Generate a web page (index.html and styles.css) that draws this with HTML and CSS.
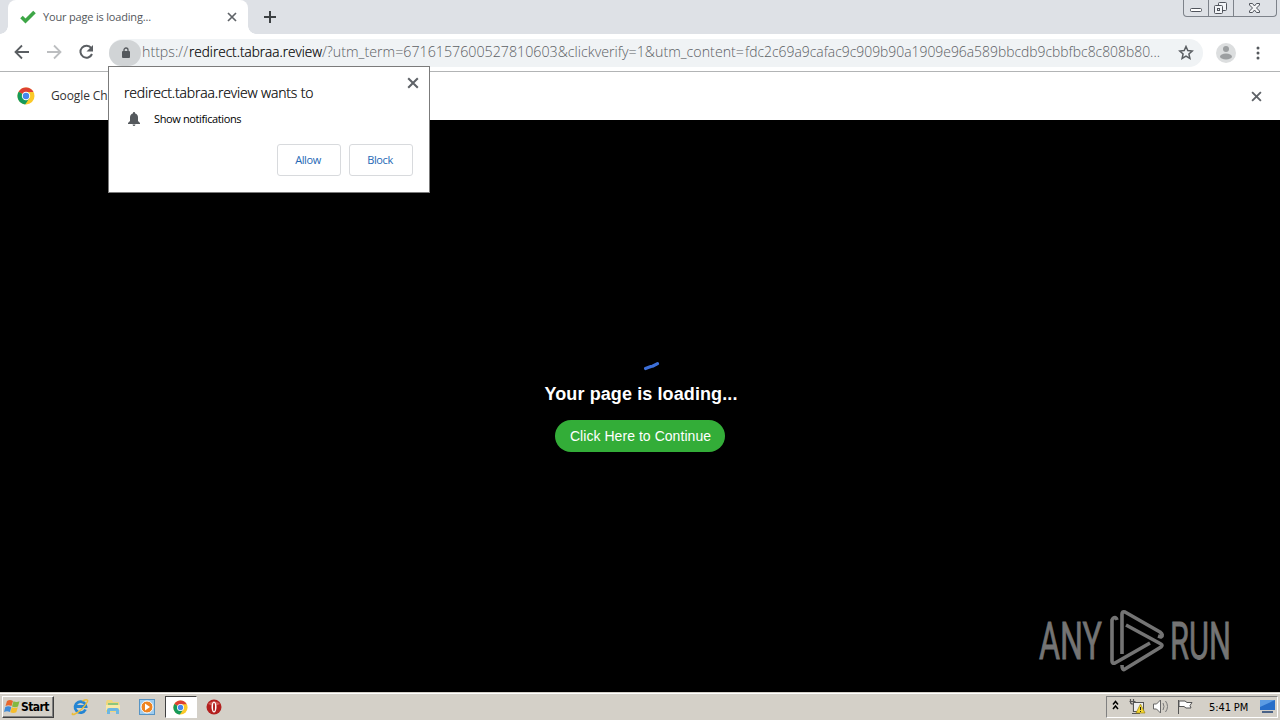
FILE: index.html
```html
<!DOCTYPE html>
<html lang="en">
<head>
    <meta charset="UTF-8">
    <meta name="viewport" content="width=device-width, initial-scale=1.0">
    <title>Your page is loading...</title>
    <link rel="stylesheet" href="styles.css">
</head>
<body>
    <svg width="0" height="0" class="defs">
        <symbol id="chrome" viewBox="0 0 18 18">
            <circle cx="9" cy="9" r="8.5" fill="#fbc928"/>
            <path d="M9 9L1.6 4.8A8.5 8.5 0 0 1 16.5 5H9z" fill="#dd4034"/>
            <path d="M9 9L1.6 4.8A8.5 8.5 0 0 0 8.2 17.5L12.5 11z" fill="#159a5a"/>
            <circle cx="9" cy="9" r="4.2" fill="#fff"/>
            <circle cx="9" cy="9" r="3.2" fill="#4688ee"/>
        </symbol>
        <symbol id="close" viewBox="0 0 10 10">
            <path d="M1 1l8 8M9 1L1 9" stroke="#5f6368" stroke-width="1.7"/>
        </symbol>
    </svg>
    <div class="tabs">
        <div class="tab">
            <svg class="check" width="16" height="14" viewBox="0 0 16 14"><path d="M1.500 7l4 4L14.500 2" fill="none" stroke="#3da646" stroke-width="3.600"/></svg>
            <span class="tab-title">Your page is loading...</span>
            <svg class="tab-close" width="10" height="10"><use href="#close"/></svg>
        </div>
        <svg class="plus" width="12" height="12" viewBox="0 0 12 12"><path d="M6 0v12M0 6h12" stroke="#3c4043" stroke-width="2"/></svg>
        <ul class="win-btn">
            <li><svg width="24" height="16" viewBox="0 0 24 16"><rect x="6.500" y="8.500" width="11" height="3" rx="1" fill="#fff" stroke="#50545c"/></svg></li>
            <li><svg width="24" height="16" viewBox="0 0 24 16"><g fill="#f2f4f7" stroke="#50545c"><rect x="9.500" y="2.500" width="8" height="8" rx="1"/><rect x="5.500" y="5.500" width="8" height="8" rx="1"/><rect x="8.500" y="8.500" width="2" height="2"/></g></svg></li>
            <li><svg width="42" height="16" viewBox="0 0 42 16"><path d="M15.500 3.500h3l2 2.500 2-2.500h3v1.500l-3 3 3 3v1.500h-3l-2-2.500-2 2.500h-3V11l3-3-3-3z" fill="#f4f5f7" stroke="#50545c"/></svg></li>
        </ul>
    </div>
    <div class="toolbar">
        <svg class="nav" width="108" height="37" viewBox="0 0 108 37">
            <path d="M29 18H16M22 11.500L15.500 18l6.500 6.500" fill="none" stroke="#5a5e62" stroke-width="1.800"/>
            <path d="M47 18h13M54 11.500l6.500 6.500-6.500 6.500" fill="none" stroke="#bcbec0" stroke-width="1.800"/>
            <path d="M91.300 14.200A6 6 0 1 0 92 20" fill="none" stroke="#5a5e62" stroke-width="2"/>
            <path d="M93 11v6.500h-6.500z" fill="#5a5e62"/>
        </svg>
        <div class="omnibox">
            <span class="lock"><svg width="8" height="12" viewBox="0 0 8 12"><rect y="4" width="8" height="7" rx="1" fill="#55595d"/><path d="M2 4.500V3a2 2 0 0 1 4 0v1.500" fill="none" stroke="#55595d" stroke-width="1.300"/></svg></span>
            <svg class="url" width="1022" height="28">
                <text x="0" y="18" textLength="46" lengthAdjust="spacingAndGlyphs">https://</text>
                <text class="host" x="47" y="18" textLength="133" lengthAdjust="spacingAndGlyphs">redirect.tabraa.review</text>
                <text x="180" y="18" textLength="422" lengthAdjust="spacingAndGlyphs">/?utm_term=6716157600527810603&amp;clickverify=1&amp;utm_content=</text>
                <text x="603" y="18" textLength="415" lengthAdjust="spacingAndGlyphs">fdc2c69a9cafac9c909b90a1909e96a589bbcdb9cbbfbc8c808b80...</text>
            </svg>
            <svg class="star" width="16" height="16" viewBox="0 0 16 16"><path d="M8 1.500l1.800 4.100 4.400.4-3.300 3 1 4.400L8 11.100l-3.900 2.300 1-4.400-3.300-3 4.400-.4z" fill="none" stroke="#5a5e62" stroke-width="1.500"/></svg>
        </div>
        <svg class="avatar" width="20" height="20" viewBox="0 0 20 20"><circle cx="10" cy="10" r="10" fill="#dcdedf"/><circle cx="10" cy="6" r="3" fill="#9c9fa1"/><ellipse cx="10" cy="13.500" rx="6" ry="3" fill="#9c9fa1"/></svg>
        <svg class="dots" width="4" height="14" viewBox="0 0 4 14"><g fill="#55595d"><circle cx="2" cy="2" r="1.500"/><circle cx="2" cy="7" r="1.500"/><circle cx="2" cy="12" r="1.500"/></g></svg>
    </div>
    <div class="infobar">
        <svg width="18" height="18"><use href="#chrome"/></svg>
        <span>Google Ch</span>
        <svg class="info-close" width="11" height="11"><use href="#close"/></svg>
    </div>
    <div class="page">
        <svg class="spinner" width="20" height="14" viewBox="0 0 20 14"><path d="M3.500 10.500l4-1.500 3.500-1 5.500-2.800" fill="none" stroke="#3d6fd8" stroke-width="3.200" stroke-linecap="round" stroke-dasharray="5.500 2"/><path d="M4 10.300l4-1.400 3.500-1 4.500-2.400" fill="none" stroke="#3d6fd8" stroke-width="1.600"/></svg>
        <h1>Your page is loading...</h1>
        <a class="continue">Click Here to Continue</a>
        <svg class="watermark" width="240" height="80" viewBox="0 0 240 80">
            <text x="19" y="59" textLength="63" lengthAdjust="spacingAndGlyphs">ANY</text>
            <text x="150" y="59" textLength="61" lengthAdjust="spacingAndGlyphs">RUN</text>
            <g fill="none" stroke="#747474" stroke-width="3.600" stroke-linejoin="round">
                <path d="M97 20q-1-4-4-1.500L92 20v41q0 3 3 2l35-20"/>
                <path d="M102 54V14q0-3 3-2l35 20q4 3 1 5l-3-1"/>
                <path d="M106 25l35 19q2 1 0 3l-36 22q-3 2-3-4"/>
            </g>
        </svg>
    </div>
    <div class="taskbar">
        <div class="start">
            <svg width="17" height="16" viewBox="0 0 17 16"><path d="M3 2q3-2 6 0L7.500 7q-3-1.500-6 0z" fill="#e8672c"/><path d="M9.500 2.300q3 1.500 6 0L14 7.500q-3 1.500-6 0z" fill="#83b841"/><path d="M1.300 8q3-1.500 6 0L6 13q-3-1.500-6 0z" fill="#3f8bd8"/><path d="M7.800 8.300q3 1.500 6 0l-1.500 5q-3 1.500-6 0z" fill="#f6bd2c"/></svg>
            <span>Start</span>
        </div>
        <ul class="launch">
            <li><svg width="18" height="18" viewBox="0 0 18 18"><path d="M14.500 11.500A5.500 5.500 0 1 1 15 8.500H5" fill="none" stroke="#2485d3" stroke-width="2.800"/><path d="M2 15Q0 17 3 16.500 12 12 16.500 3.500q1-3-5-.5" fill="none" stroke="#ecbd38" stroke-width="1.500"/></svg></li>
            <li><svg width="18" height="18" viewBox="0 0 18 18"><path d="M2 4l1-2h5l1 2h6v10H2z" fill="#f0d67c"/><path d="M4 5h10v3H4z" fill="#8cc67c"/><path d="M2 7h14v5H2z" fill="#f9e9a7"/><path d="M3 16v-4q0-2 2-2h8q2 0 2 2v4h-3v-3H6v3z" fill="#6db7e2"/></svg></li>
            <li><svg width="18" height="18" viewBox="0 0 18 18"><rect x="1.500" y="1.500" width="15" height="15" fill="#9dccef" stroke="#5794c4"/><circle cx="9" cy="9" r="6" fill="#ee8421" stroke="#fff"/><path d="M7 5.500l5 3.500-5 3.500z" fill="#fff"/></svg></li>
            <li class="active"><svg width="15" height="15"><use href="#chrome"/></svg></li>
            <li><svg width="18" height="18" viewBox="0 0 18 18"><circle cx="9" cy="9" r="7.500" fill="#b3201f"/><path d="M3 6a7 5 0 0 1 12 0q-6 3-12 0" fill="#d45a55"/><ellipse cx="9" cy="9" rx="2.500" ry="5.500" fill="#fff"/><ellipse cx="9" cy="9" rx="1" ry="4.200" fill="#b3201f"/></svg></li>
        </ul>
        <div class="tray">
            <svg width="90" height="20" viewBox="0 0 90 20">
                <path d="M6 7.500l2.500-3L11 7.500M6 12l2.500-3 2.500 3" fill="none" stroke="#000" stroke-width="1.500"/>
                <path d="M23.500 2v3q0 2 2 2h1v8M26.500 2v5M22.500 4.500h6" fill="none" stroke="#555" stroke-width="1.200"/>
                <rect x="26.500" y="5.500" width="10" height="9" fill="#eee" stroke="#555"/>
                <path d="M25 16.500h8" stroke="#555"/>
                <path d="M33.500 7l4.500 9h-9z" fill="#f6d72e" stroke="#9b8419" stroke-width=".7"/><path d="M33.500 10v3M33.500 14v1" stroke="#222"/>
                <path d="M46.500 7h3l4-4v13l-4-4h-3z" fill="#fff" stroke="#666"/>
                <path d="M56 6q2 3.500 0 7M58.500 4q4 5.500 0 11" fill="none" stroke="#777"/>
                <path d="M71.500 17V3M72 4h6l2 1.500h5l-2 3 1 2.500h-5l-2-1.500H72z" fill="#fff" stroke="#555"/>
            </svg>
            <span class="time">5:41 PM</span>
            <svg width="17" height="16" viewBox="0 0 17 16"><path d="M1 1h15v10H1z" fill="#276ec9"/><path d="M1 1h15L1 8z" fill="#5c9ce3"/><path d="M3 13h11" stroke="#1c3e70" stroke-width="1.500"/></svg>
        </div>
    </div>
    <div class="popup">
        <svg class="popup-close" width="12" height="12"><use href="#close"/></svg>
        <p class="popup-title">redirect.tabraa.review wants to</p>
        <p class="popup-text">
            <svg width="12" height="14" viewBox="0 0 12 14"><path d="M6 0q1.200 0 1.200 1.400Q10 2.200 10 5.500V9l2 2v1H0v-1l2-2V5.500Q2 2.200 4.800 1.400 4.800 0 6 0zM4.500 12.500h3Q7.200 14 6 14t-1.500-1.500" fill="#55595d"/></svg>
            <span>Show notifications</span>
        </p>
        <div class="popup-btn">
            <button>Allow</button>
            <button>Block</button>
        </div>
    </div>
</body>
</html>
```
FILE: styles.css
```css
*{
    padding: 0;
    margin: 0;
    box-sizing: border-box;
}
li{
    list-style: none;
}
svg{
    display: block;
    flex: none;
}
.defs{
    position: absolute;
}
body{
    width: 1280px;
    height: 720px;
    overflow: hidden;
    display: flex;
    flex-direction: column;
    position: relative;
    background-color: #fff;
    font-family: "Open Sans", "Noto Sans", sans-serif;
    white-space: nowrap;
}
.tabs{
    height: 34px;
    background-color: #dee1e6;
    display: flex;
    align-items: center;
    padding-left: 8px;
}
.tab{
    width: 240px;
    height: 34px;
    background-color: #fff;
    border-radius: 8px 8px 0 0;
    display: flex;
    align-items: center;
    padding: 0 11px 0 12px;
    position: relative;
}
.tab::before,.tab::after{
    content: "";
    position: absolute;
    bottom: 0;
    left: -8px;
    width: 8px;
    height: 8px;
    background: radial-gradient(circle at 0 0, #dee1e6 7.5px, #fff 8px);
}
.tab::after{
    left: 240px;
    background: radial-gradient(circle at 100% 0, #dee1e6 7.5px, #fff 8px);
}
.tab-title{
    font-size: 11px;
    color: #54585c;
    margin-left: 7px;
    padding-bottom: 2px;
    letter-spacing: -0.18px;
}
.tab-close{
    margin-left: auto;
}
.plus{
    margin-left: 16px;
}
.win-btn{
    display: flex;
    align-self: flex-start;
    margin: 0 3px 0 auto;
    height: 17px;
    border: 1px solid #7d828a;
    border-top: none;
    border-radius: 0 0 4px 4px;
}
.win-btn li + li{
    border-left: 1px solid #7d828a;
}
.toolbar{
    height: 38px;
    display: flex;
    align-items: center;
    border-bottom: 1px solid #b2b4b5;
}
.omnibox{
    width: 1094px;
    height: 28px;
    border-radius: 14px;
    background-color: #f0f3f5;
    margin-left: 1px;
    display: flex;
    align-items: center;
}
.lock{
    width: 32px;
    height: 26px;
    border-radius: 13px;
    background-color: #d1d4d6;
    display: flex;
    align-items: center;
    justify-content: center;
    padding-left: 1px;
}
.url{
    font-size: 14px;
    font-weight: 300;
    fill: #5c6064;
    margin-left: 1px;
}
.url .host{
    fill: #000;
    stroke: #000;
    stroke-width: 0.2px;
}
.star{
    margin-left: 14px;
}
.avatar{
    margin-left: 13px;
}
.dots{
    margin-left: 20px;
}
.infobar{
    height: 48px;
    display: flex;
    align-items: center;
    padding: 0 18px 0 17px;
    font-size: 12px;
    color: #333;
}
.infobar span{
    margin-left: 16px;
    padding-bottom: 2px;
    letter-spacing: -0.1px;
}
.info-close{
    margin-left: auto;
}
.page{
    height: 572px;
    background-color: #000;
    display: flex;
    flex-direction: column;
    align-items: center;
    padding-top: 238px;
    position: relative;
    font-family: "Liberation Sans", Arial, sans-serif;
    color: #fff;
}
.spinner{
    margin-left: 24px;
}
h1{
    font-size: 18px;
    line-height: 22px;
    margin-top: 11px;
    padding-left: 2px;
    letter-spacing: 0.1px;
}
.continue{
    width: 170px;
    height: 32px;
    line-height: 32px;
    margin-top: 15px;
    border-radius: 16px;
    background-color: #33ad38;
    text-align: center;
    font-size: 14px;
    letter-spacing: 0.05px;
    padding-left: 1px;
}
.watermark{
    position: absolute;
    left: 1020px;
    top: 480px;
    font-family: Roboto, sans-serif;
    font-size: 51px;
    fill: #747474;
}
.watermark text{
    stroke: #747474;
    stroke-width: 0.8px;
}
.taskbar{
    height: 28px;
    background-color: #d4d0c8;
    border-top: 1px solid #d4d0c8;
    box-shadow: inset 0 1px #fff;
    display: flex;
    align-items: center;
    padding: 1px 2px 0;
    font-family: "DejaVu Sans Condensed", sans-serif;
    font-size: 11px;
}
.start{
    width: 52px;
    height: 22px;
    border: 1px solid;
    border-color: #fff #404040 #404040 #fff;
    box-shadow: inset -1px -1px #808080;
    display: flex;
    align-items: center;
    font-size: 12px;
    font-weight: bold;
    padding-left: 1px;
    letter-spacing: -0.6px;
}
.launch{
    display: flex;
    margin-left: 9px;
}
.launch li{
    width: 33.5px;
    height: 22px;
    display: flex;
    align-items: center;
    justify-content: center;
}
.launch .active{
    width: 32px;
    margin: 0 1px;
    background-color: #fff;
    border: 1px solid;
    border-color: #404040 #fff #fff #404040;
}
.tray{
    width: 172px;
    height: 22px;
    margin-left: auto;
    border: 1px solid;
    border-color: #808080 #fff #fff #808080;
    display: flex;
    align-items: center;
    padding-right: 1px;
}
.time{
    margin: 0 auto 0 12px;
    letter-spacing: -0.1px;
}
.popup{
    position: absolute;
    left: 108px;
    top: 66px;
    width: 322px;
    height: 127px;
    background-color: #fff;
    border: 1px solid #7b7b7b;
    padding: 16px 16px 16px 15px;
    color: #000;
}
.popup-close{
    position: absolute;
    right: 10px;
    top: 10px;
}
.popup-title{
    font-size: 14px;
    line-height: 20px;
    font-weight: 300;
    letter-spacing: -0.16px;
    -webkit-text-stroke: 0.2px #000;
}
.popup-text{
    display: flex;
    align-items: center;
    height: 16px;
    margin-top: 8px;
    padding-left: 4px;
    font-size: 11px;
    letter-spacing: -0.38px;
}
.popup-text span{
    margin-left: 14px;
    padding-bottom: 2px;
}
.popup-btn{
    display: flex;
    justify-content: flex-end;
    gap: 8px;
    margin-top: 17px;
}
.popup-btn button{
    width: 64px;
    height: 32px;
    border: 1px solid #d8dadd;
    border-radius: 3px;
    background-color: #fff;
    color: #2468b5;
    font: 11px "Open Sans", sans-serif;
    letter-spacing: -0.4px;
    padding: 0 2px 2px 0;
}
```
